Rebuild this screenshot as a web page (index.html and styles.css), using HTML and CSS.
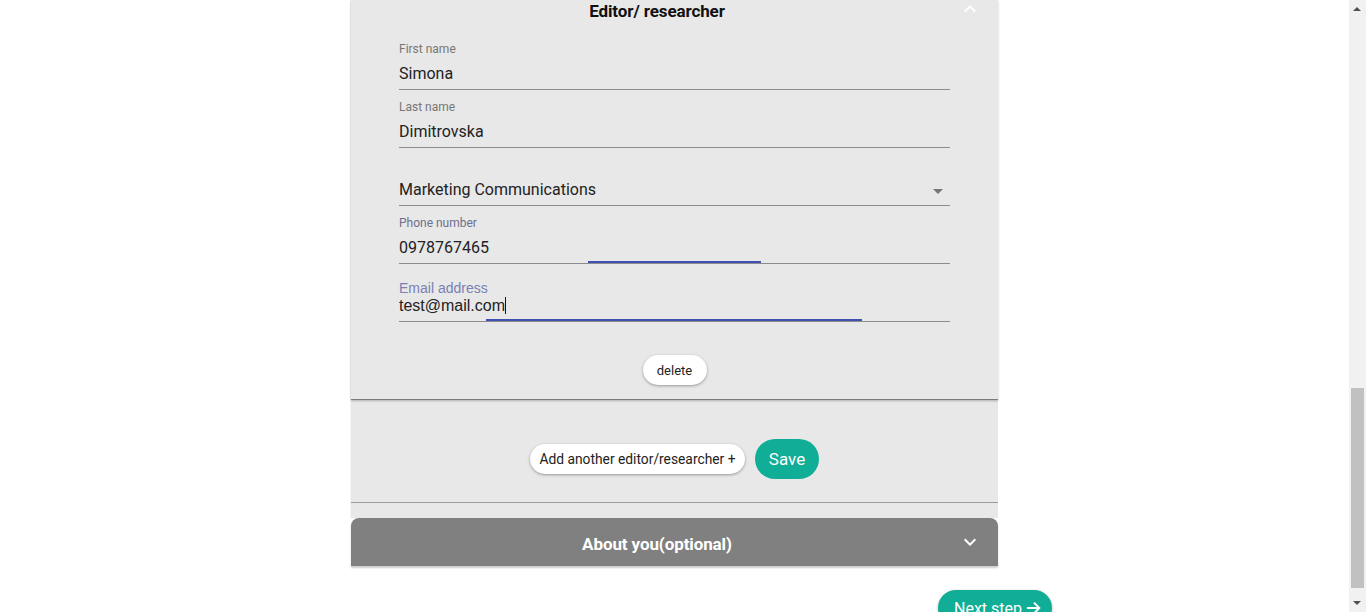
FILE: index.html
```html
<!DOCTYPE html>
<html>
<head>
<meta charset="utf-8">
<link rel="stylesheet" href="styles.css">
</head>
<body>
<div class="page">
  <div class="column">
    <div class="panel">
      <div class="editor-card">
        <div class="acc-head">
          <div class="acc-title">Editor/ researcher</div>
          <div class="acc-icon">
            <svg width="24" height="24" viewBox="0 0 24 24"><path d="M7.41 15.41L12 10.83l4.59 4.58L18 14l-6-6-6 6z" fill="#fff"/></svg>
          </div>
        </div>
        <div class="fields">
          <div class="field">
            <div class="label">First name</div>
            <div class="value">Simona</div>
          </div>
          <div class="field">
            <div class="label">Last name</div>
            <div class="value">Dimitrovska</div>
          </div>
          <div class="field select">
            <div class="label"></div>
            <div class="value">Marketing Communications<span class="caret"></span></div>
          </div>
          <div class="field">
            <div class="label label-phone">Phone number</div>
            <div class="value">0978767465</div>
            <span class="focus-bar bar-phone"></span>
          </div>
          <div class="field">
            <div class="label label-email">Email address</div>
            <div class="value value-email">test@mail.com<span class="cursor"></span></div>
            <span class="focus-bar bar-email"></span>
          </div>
          <div class="delete-row">
            <button class="pill delete">delete</button>
          </div>
        </div>
      </div>
      <div class="actions">
        <button class="pill add">Add another editor/researcher +</button>
        <button class="save">Save</button>
      </div>
      <div class="spacer"></div>
    </div>
    <div class="about">
      <div class="acc-title about-title">About you(optional)</div>
      <div class="acc-icon about-icon">
        <svg width="24" height="24" viewBox="0 0 24 24"><path d="M16.59 8.59L12 13.17 7.41 8.59 6 10l6 6 6-6z" fill="#fff"/></svg>
      </div>
    </div>
    <div class="next-row">
      <button class="next"><span>Next step</span>
        <svg width="18" height="16" viewBox="0 0 18 16"><path d="M1 8h14M9 2l6 6-6 6" stroke="#fff" stroke-width="2.2" fill="none"/></svg>
      </button>
    </div>
  </div>
</div>
<div class="scrollbar">
  <span class="sb-up"></span>
  <span class="sb-thumb"></span>
  <span class="sb-down"></span>
</div>
</body>
</html>
```

FILE: styles.css
```css
html, body {
  margin: 0;
  padding: 0;
  background: #fff;
  overflow: hidden;
  height: 612px;
}
body {
  font-family: Roboto, "Liberation Sans", Arial, sans-serif;
}
.page {
  width: 1349px;
  height: 612px;
  overflow: hidden;
}
.column {
  width: 647px;
  margin: 0 auto;
}
.panel {
  background: #e8e8e8;
  box-shadow: -1px 0 0 #f4f4f4;
}
.editor-card {
  background: #e8e8e8;
  border-bottom: 1px solid #7b7b7b;
  box-shadow: 0 1px 2px rgba(0,0,0,0.25);
  position: relative;
}
.acc-head {
  display: flex;
  align-items: center;
  height: 22px;
  padding-left: 16px;
}
.acc-title {
  flex: 1;
  text-align: center;
  font-weight: 700;
  font-size: 17px;
  letter-spacing: -0.1px;
  color: #111;
  white-space: nowrap;
}
.acc-icon {
  width: 46px;
  margin-right: 5px;
  display: flex;
  justify-content: center;
  align-items: center;
  height: 22px;
}
.acc-head .acc-icon svg {
  margin-top: -4px;
}
.fields {
  padding: 19px 48px 14px 48px;
}
.field {
  position: relative;
  margin-bottom: 9px;
  padding-top: 1px;
  border-bottom: 1px solid #8c8c8c;
}
.label {
  height: 14px;
  line-height: 14px;
  font-size: 12px;
  color: #777;
  margin-bottom: 6px;
}
.value {
  height: 24px;
  line-height: 24px;
  font-size: 16px;
  color: #222;
  padding-bottom: 3px;
  position: relative;
}
.label-phone {
  color: #6f6f8c;
}
.label-email {
  font-family: "Liberation Sans", Arial, sans-serif;
  font-size: 14px;
  color: #7a80b4;
  padding-top: 7px;
  margin-bottom: -1px;
}
.value-email {
  font-family: "Liberation Sans", Arial, sans-serif;
  padding-bottom: 3px;
}
.cursor {
  display: inline-block;
  width: 1px;
  height: 17px;
  background: #111;
  vertical-align: -3px;
}
.caret {
  position: absolute;
  right: 7px;
  top: 11px;
  width: 0;
  height: 0;
  border-left: 5px solid transparent;
  border-right: 5px solid transparent;
  border-top: 5px solid #767676;
}
.focus-bar {
  position: absolute;
  bottom: 0;
  height: 2px;
  background: #3f51b5;
}
.bar-phone {
  left: 189px;
  width: 173px;
}
.bar-email {
  left: 87px;
  width: 376px;
}
.delete-row {
  display: flex;
  justify-content: center;
  padding-top: 24px;
}
.pill {
  background: #fff;
  border: none;
  border-radius: 15px;
  height: 30px;
  font-family: Roboto, "Liberation Sans", Arial, sans-serif;
  font-size: 13px;
  color: #222;
  box-shadow: 0 1px 3px rgba(0,0,0,0.35);
  padding: 0 14px;
}
.delete {
  width: 64px;
  padding: 0;
}
.add {
  width: 215px;
  padding: 0;
  font-size: 13.8px;
}
.actions {
  display: flex;
  justify-content: center;
  align-items: center;
  gap: 10px;
  padding: 39px 0 23px;
  border-bottom: 1px solid #9e9e9e;
}
.save {
  width: 64px;
  height: 40px;
  border-radius: 20px;
  border: none;
  background: #10ae96;
  color: #fff;
  font-family: Roboto, "Liberation Sans", Arial, sans-serif;
  font-size: 17px;
  padding: 0;
}
.spacer {
  height: 15px;
}
.about {
  height: 48px;
  background: #808080;
  border-radius: 8px 8px 0 0;
  display: flex;
  align-items: center;
  padding-left: 16px;
  box-shadow: 0 2px 2px rgba(0,0,0,0.2);
}
.about-title {
  color: #fff;
  margin-top: 4px;
}
.next-row {
  display: flex;
  justify-content: flex-end;
  margin-right: -54px;
  padding-top: 24px;
}
.next {
  height: 36px;
  border-radius: 18px;
  border: none;
  background: #10ae96;
  color: #fff;
  font-family: Roboto, "Liberation Sans", Arial, sans-serif;
  font-size: 16px;
  padding: 0 10px 0 16px;
  display: flex;
  align-items: center;
  gap: 4px;
  white-space: nowrap;
  width: 114px;
  box-shadow: 0 1px 3px rgba(0,0,0,0.3);
}
.scrollbar {
  position: fixed;
  right: 0;
  top: 0;
  width: 17px;
  height: 612px;
  background: #f1f1f1;
}
.sb-up {
  position: absolute;
  left: 4px;
  top: 7px;
  width: 0;
  height: 0;
  border-left: 4px solid transparent;
  border-right: 4px solid transparent;
  border-bottom: 4px solid #505050;
}
.sb-down {
  position: absolute;
  left: 4px;
  bottom: 7px;
  width: 0;
  height: 0;
  border-left: 4px solid transparent;
  border-right: 4px solid transparent;
  border-top: 4px solid #505050;
}
.sb-thumb {
  position: absolute;
  left: 2px;
  top: 388px;
  width: 13px;
  height: 200px;
  background: #c1c1c1;
}
```
